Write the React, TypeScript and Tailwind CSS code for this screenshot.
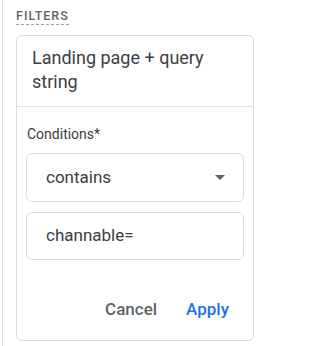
export default function App() {
  return (
    <div
      className="w-[260px] h-[346px] bg-white overflow-hidden relative"
      style={{ fontFamily: 'Roboto, "Liberation Sans", sans-serif' }}
    >
      <div className="absolute left-[2px] top-0 bottom-0 w-px bg-[#e0e0e0]" />
      <div className="pl-4 pt-[8px] flex flex-col items-start">
        <div className="text-[12.5px] font-medium tracking-[1px] text-[#5f6368] leading-[16px] border-b border-dashed border-[#9aa0a6]">
          FILTERS
        </div>
        <div className="mt-[10px] w-[238px] h-[306px] rounded-md border border-[#dadce0] flex flex-col">
          <div className="px-[15px] pt-[10px] pb-[12px] text-[18px] leading-[24px] text-[#3c4043] border-b border-[#e0e0e0]">
            Landing page + query string
          </div>
          <div className="px-[9px] pt-[19px] flex flex-col">
            <div className="pl-px text-[14px] leading-[16px] text-[#3c4043]">Conditions*</div>
            <div className="mt-[11px] h-[49px] rounded-md border border-[#dadce0] flex items-center pl-[19px] pr-[18px]">
              <span className="flex-1 text-[17px] text-[#3c4043]">contains</span>
              <svg width="10" height="5" viewBox="0 0 10 5">
                <path d="M0 0h10L5 5z" fill="#5f6368" />
              </svg>
            </div>
            <div className="mt-[10px] h-[48px] rounded-md border border-[#dadce0] flex items-center pl-[19px] text-[17px] text-[#3c4043]">
              channable=
            </div>
          </div>
          <div className="mt-[31px] flex justify-end items-center pr-[16px] gap-[13px]">
            <button className="px-[8px] h-[36px] leading-[36px] text-[17px] font-medium text-[#5f6368]">Cancel</button>
            <button className="px-[8px] h-[36px] leading-[36px] text-[17px] font-medium text-[#1a73e8]">Apply</button>
          </div>
        </div>
      </div>
    </div>
  )
}
